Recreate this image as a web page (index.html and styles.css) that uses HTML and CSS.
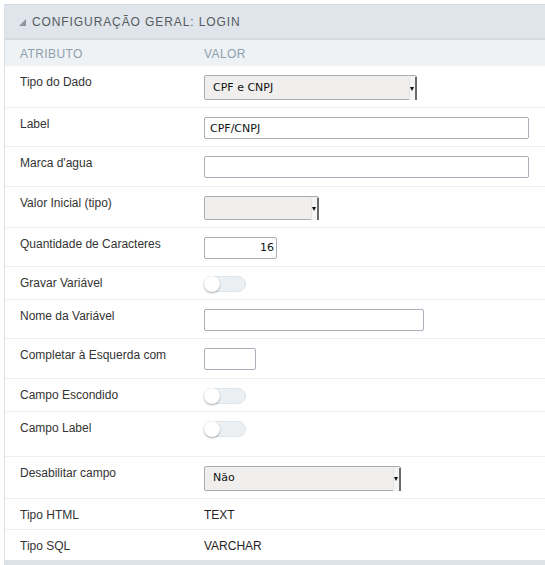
FILE: index.html
```html
<!DOCTYPE html>
<html lang="pt-BR">
<head>
<meta charset="utf-8">
<title>Configuração Geral: Login</title>
<link rel="stylesheet" href="styles.css">
</head>
<body>
<div class="panel">
  <div class="panel-title">
    <svg class="caret" width="7" height="7" viewBox="0 0 7 7"><polygon points="7,0 7,7 0,7" fill="#8c96a0"/></svg>
    <span>CONFIGURAÇÃO GERAL: LOGIN</span>
  </div>
  <div class="row head">
    <div class="cell-label">ATRIBUTO</div>
    <div class="cell-value">VALOR</div>
  </div>
  <div class="row">
    <div class="cell-label">Tipo do Dado</div>
    <div class="cell-value"><span class="select w212"><span class="sel-text">CPF e CNPJ</span><span class="sel-arrow"></span></span></div>
  </div>
  <div class="row">
    <div class="cell-label">Label</div>
    <div class="cell-value"><input class="field w325" type="text" value="CPF/CNPJ"></div>
  </div>
  <div class="row">
    <div class="cell-label">Marca d'agua</div>
    <div class="cell-value"><input class="field w325" type="text" value=""></div>
  </div>
  <div class="row">
    <div class="cell-label">Valor Inicial (tipo)</div>
    <div class="cell-value"><span class="select w114 short"><span class="sel-text"></span><span class="sel-arrow"></span></span></div>
  </div>
  <div class="row">
    <div class="cell-label">Quantidade de Caracteres</div>
    <div class="cell-value"><input class="field w73 num" type="text" value="16"></div>
  </div>
  <div class="row">
    <div class="cell-label">Gravar Variável</div>
    <div class="cell-value"><span class="toggle"><span class="knob"></span></span></div>
  </div>
  <div class="row">
    <div class="cell-label">Nome da Variável</div>
    <div class="cell-value"><input class="field w220" type="text" value=""></div>
  </div>
  <div class="row">
    <div class="cell-label">Completar à Esquerda com</div>
    <div class="cell-value"><input class="field w52" type="text" value=""></div>
  </div>
  <div class="row">
    <div class="cell-label">Campo Escondido</div>
    <div class="cell-value"><span class="toggle"><span class="knob"></span></span></div>
  </div>
  <div class="row tall">
    <div class="cell-label">Campo Label</div>
    <div class="cell-value"><span class="toggle"><span class="knob"></span></span></div>
  </div>
  <div class="row">
    <div class="cell-label">Desabilitar campo</div>
    <div class="cell-value"><span class="select w197"><span class="sel-text">Não</span><span class="sel-arrow"></span></span></div>
  </div>
  <div class="row">
    <div class="cell-label">Tipo HTML</div>
    <div class="cell-value text">TEXT</div>
  </div>
  <div class="row last">
    <div class="cell-label">Tipo SQL</div>
    <div class="cell-value text">VARCHAR</div>
  </div>
  <div class="panel-foot"></div>
</div>
</body>
</html>
```
FILE: styles.css
```css
html, body {
  margin: 0;
  padding: 0;
  background: #ffffff;
}
body {
  padding: 4px 0 0 4px;
  font-family: "Liberation Sans", Arial, sans-serif;
  font-size: 12px;
  color: #333333;
  overflow: hidden;
}
.panel {
  width: 541px;
  border-left: 1px solid #d9e0e6;
  border-top: 1px solid #d3dbe1;
}
.panel-title {
  display: flex;
  align-items: center;
  height: 33px;
  background: #dfe5ea;
  border-bottom: 2px solid #d3dbe1;
  padding-left: 14px;
  gap: 6px;
  color: #555b61;
  font-size: 12px;
  letter-spacing: 0.9px;
}
.caret {
  display: block;
  margin-top: 1px;
}
.row {
  display: grid;
  grid-template-columns: 183px 1fr;
  border-bottom: 1px solid #edf0f3;
  align-items: start;
}
.row.head {
  background: #eef2f5;
  border-bottom: none;
  height: 26px;
  align-items: center;
  color: #8d9fad;
  font-size: 12px;
  letter-spacing: 0.4px;
}
.row.head .cell-label,
.row.head .cell-value {
  padding-top: 1px;
  padding-bottom: 0;
  line-height: 14px;
}
.row.tall {
  min-height: 44px;
}
.row.last {
  border-bottom: none;
}
.cell-label {
  padding: 9px 0 0 15px;
  line-height: 14px;
}
.cell-value {
  padding: 9px 0 7.2px 16px;
  line-height: 14px;
}
.cell-value.text {
  color: #1f1f1f;
}
.field {
  display: block;
  box-sizing: border-box;
  height: 22px;
  border: 1px solid #a8afb8;
  border-radius: 2px;
  margin: 0;
  padding: 0 5px;
  font-family: "DejaVu Sans", Tahoma, sans-serif;
  font-size: 11px;
  color: #111;
  background: #fff;
  outline: none;
}
.field.num {
  text-align: right;
  padding-right: 2px;
}
.w325 { width: 325px; }
.w73 { width: 73px; }
.w220 { width: 220px; }
.w52 { width: 52px; }
.w212 { width: 213px; }
.w114 { width: 115px; }
.w197 { width: 197px; }
.select {
  box-sizing: border-box;
  display: flex;
  align-items: center;
  justify-content: space-between;
  height: 25px;
  border: 1px solid #a9adb2;
  border-radius: 2px;
  background: #f0efee;
  font-family: "DejaVu Sans", Tahoma, sans-serif;
  font-size: 11px;
  line-height: 14px;
  color: #111;
}
.select.short {
  height: 24px;
}
.sel-text {
  padding-left: 8px;
}
.sel-arrow {
  align-self: stretch;
  width: 5px;
  display: flex;
  align-items: center;
  justify-content: flex-start;
  border-left: 1px solid #e4e3e2;
  border-right: 2px solid #6a6a6a;
  margin: 1px -1px -1px 0;
  background: #f4f4f4;
}
.sel-arrow::before {
  content: "";
  display: block;
  width: 0;
  height: 0;
  border-left: 2.5px solid transparent;
  border-right: 2.5px solid transparent;
  border-top: 4px solid #111;
}
.toggle {
  display: block;
  position: relative;
  box-sizing: border-box;
  width: 42px;
  height: 16px;
  border-radius: 8px;
  background: #edf0f3;
  border: 1px solid #dfe4e8;
}
.knob {
  position: absolute;
  left: -1px;
  top: -1px;
  width: 16px;
  height: 16px;
  border-radius: 50%;
  background: #ffffff;
  box-shadow: 0 1px 2px rgba(0, 0, 0, 0.35);
}
.panel-foot {
  height: 6px;
  background: #dbe2e8;
}
```
